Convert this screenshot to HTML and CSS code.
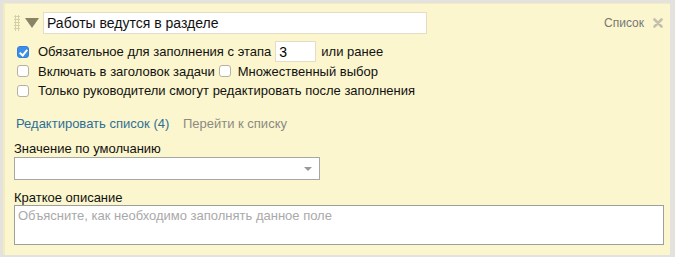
FILE: index.html
```html
<!DOCTYPE html>
<html lang="ru">
<head>
<meta charset="utf-8">
<title>Поле: Список</title>
<link rel="stylesheet" href="styles.css">
</head>
<body>

<div class="field">
    <div class="head">
        <span class="handle"></span>
        <span class="toggle"></span>
        <input type="text" class="title" value="Работы ведутся в разделе">
        <span class="type">Список</span>
        <svg class="close" width="10" height="10" viewBox="0 0 10 10">
            <path d="M1.5 1.5 L8.5 8.5 M8.5 1.5 L1.5 8.5" stroke="#c4c0ab" stroke-width="2.6" stroke-linecap="round"/>
        </svg>
    </div>

    <div class="opts">
        <div class="opt">
            <span class="box checked"></span>
            <span>Обязательное для заполнения с этапа</span>
            <input type="text" class="stage" value="3">
            <span>или ранее</span>
        </div>
        <div class="opt">
            <span class="box"></span>
            <span>Включать в заголовок задачи</span>
            <span class="box"></span>
            <span>Множественный выбор</span>
        </div>
        <div class="opt">
            <span class="box"></span>
            <span>Только руководители смогут редактировать после заполнения</span>
        </div>
    </div>

    <div class="links">
        <a class="edit">Редактировать список (4)</a>
        <a class="go">Перейти к списку</a>
    </div>

    <label class="lbl">Значение по умолчанию</label>
    <div class="select"><span class="arrow"></span></div>

    <label class="lbl">Краткое описание</label>
    <div class="area">Объясните, как необходимо заполнять данное поле</div>
</div>

</body>
</html>
```

FILE: styles.css
```css
* {
    box-sizing: border-box;
}
body {
    margin: 0;
    background: #e4e2df;
    font-family: "Liberation Sans", Arial, sans-serif;
    font-size: 13px;
    color: #111;
}
.field {
    margin: 3px 5px 2px 3px;
    height: 252px;
    background: #fbf6cd;
    border-left: 2px solid #f1ebc0;
    border-top: 1px solid #f1ebc0;
    padding: 8px 7px 0 9px;
}
.head {
    display: flex;
    align-items: center;
    height: 22px;
}
.handle {
    width: 6px;
    height: 16px;
    margin-right: 5px;
    background-image: radial-gradient(circle, #d6d0a8 1px, transparent 1.2px);
    background-size: 3px 3px;
}
.toggle {
    width: 0;
    height: 0;
    border-left: 7px solid transparent;
    border-right: 7px solid transparent;
    border-top: 10px solid #8a8467;
    margin-right: 4px;
}
.title {
    width: 384px;
    height: 22px;
    border: 1px solid #e2ddc4;
    background: #fff;
    font: 14px "Liberation Sans", Arial, sans-serif;
    padding: 0 3px;
    color: #111;
}
.type {
    margin-left: auto;
    color: #777;
    font-size: 12px;
}
.close {
    margin-left: 9px;
}
.opts {
    margin-top: 8px;
    padding-left: 3px;
}
.opt {
    display: flex;
    align-items: center;
    height: 19.5px;
}
.box {
    width: 12px;
    height: 12px;
    border: 1px solid #b5b1a5;
    border-radius: 3px;
    background: #fff;
    margin-right: 9px;
    position: relative;
}
.opt span + .box {
    margin-left: 4px;
    margin-right: 7px;
}
.box.checked {
    background: #3d8ee8;
    border-color: #3380d8;
}
.box.checked:after {
    content: "";
    position: absolute;
    left: 3px;
    top: 1px;
    width: 3px;
    height: 6px;
    border: solid #fff;
    border-width: 0 2px 2px 0;
    transform: rotate(40deg);
}
.stage {
    width: 41px;
    height: 21px;
    margin: 0 5px 0 4px;
    border: 1px solid #e2ddc4;
    background: #fff;
    font: 14px "Liberation Sans", Arial, sans-serif;
    padding: 0 3px;
}
.links {
    margin-top: 15px;
    padding-left: 2px;
}
.links a {
    margin-right: 10px;
}
.edit {
    color: #2d6f98;
}
.go {
    color: #8b8a83;
}
.lbl {
    display: block;
    margin-top: 10px;
    height: 16px;
}
.select {
    width: 306px;
    height: 23px;
    border: 1px solid #a4a9a3;
    background: #fff;
    position: relative;
}
.arrow {
    position: absolute;
    right: 7px;
    top: 9px;
    border-left: 4px solid transparent;
    border-right: 4px solid transparent;
    border-top: 4px solid #999;
}
.area {
    width: 650px;
    height: 40px;
    margin-top: -1px;
    border: 1px solid #9aa19c;
    background: #fff;
    color: #a9a9a9;
    padding: 2px 3px;
}
```
